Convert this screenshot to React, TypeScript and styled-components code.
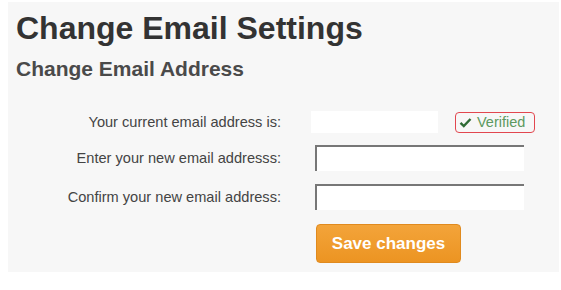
import styled, { createGlobalStyle } from 'styled-components';

const Global = createGlobalStyle`
  body {
    margin: 0;
    background: #ffffff;
    font-family: 'Liberation Sans', Arial, sans-serif;
  }
`;

const Panel = styled.div`
  margin: 2px 2px 0 8px;
  height: 270px;
  background: #f7f7f7;
  padding: 8px 0 0 8px;
  box-sizing: border-box;
`;

const Title = styled.h1`
  margin: 0;
  font-size: 32px;
  font-weight: 700;
  color: #333333;
  line-height: 36px;
`;

const Subtitle = styled.h2`
  margin: 11px 0 0;
  font-size: 21px;
  font-weight: 700;
  color: #4a4a4a;
  line-height: 24px;
`;

const Form = styled.div`
  display: grid;
  grid-template-columns: 265px auto;
  column-gap: 30px;
  row-gap: 12px;
  margin-top: 30px;
  align-items: center;
`;

const Label = styled.label`
  text-align: right;
  font-size: 14.6px;
  color: #444444;
  line-height: 20px;
`;

const Field = styled.div<{ $top?: number }>`
  display: flex;
  align-items: center;
  margin-top: ${({ $top }) => $top ?? 0}px;
`;

const Current = styled.div`
  width: 127px;
  height: 22px;
  background: #ffffff;
`;

const Verified = styled.span`
  display: inline-flex;
  align-items: center;
  gap: 5px;
  margin-left: 17px;
  height: 19px;
  padding: 0 9px 0 3px;
  border: 1px solid #e2474f;
  border-radius: 4px;
  font-size: 14.5px;
  color: #5d9a5f;
`;

const Input = styled.input`
  width: 209px;
  height: 26px;
  box-sizing: border-box;
  margin-left: 4px;
  background: #ffffff;
  border-style: solid;
  border-width: 2px 0 0 2px;
  border-color: #777777;
  outline: none;
  font: inherit;
`;

const Button = styled.button`
  margin-left: 5px;
  width: 145px;
  height: 39px;
  border: 1px solid #e08a1e;
  border-radius: 4px;
  background: linear-gradient(#f3a43a, #ec9422);
  color: #ffffff;
  font-family: inherit;
  font-size: 17px;
  font-weight: 700;
  cursor: pointer;
`;

const Spacer = styled.div``;

export default function App() {
  return (
    <>
      <Global />
      <Panel>
        <Title>Change Email Settings</Title>
        <Subtitle>Change Email Address</Subtitle>
        <Form>
          <Label>Your current email address is:</Label>
          <Field>
            <Current />
            <Verified>
              <svg width="13" height="11" viewBox="0 0 13 11">
                <path d="M1.5 5.8 L4.8 9 L11.5 2" fill="none" stroke="#2f6b35" strokeWidth="2.4" />
              </svg>
              Verified
            </Verified>
          </Field>
          <Label>Enter your new email addresss:</Label>
          <Field>
            <Input />
          </Field>
          <Label>Confirm your new email address:</Label>
          <Field $top={1}>
            <Input />
          </Field>
          <Spacer />
          <Field $top={2}>
            <Button>Save changes</Button>
          </Field>
        </Form>
      </Panel>
    </>
  );
}
